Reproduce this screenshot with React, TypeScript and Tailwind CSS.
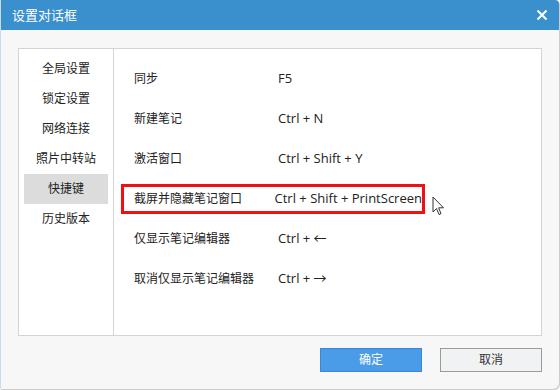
import React from "react";

const nav = ["全局设置", "锁定设置", "网络连接", "照片中转站", "快捷键", "历史版本"];
const rows: [string, string][] = [
  ["同步", "F5"],
  ["新建笔记", "Ctrl + N"],
  ["激活窗口", "Ctrl + Shift + Y"],
  ["截屏并隐藏笔记窗口", "Ctrl + Shift + PrintScreen"],
  ["仅显示笔记编辑器", "Ctrl + ←"],
  ["取消仅显示笔记编辑器", "Ctrl + →"],
];

const font = { fontFamily: '"Segoe UI", "Open Sans", "Noto Sans CJK SC", sans-serif' };

export default function App() {
  return (
    <div className="w-[560px] h-[390px] bg-white relative overflow-hidden" style={font}>
      <div className="w-[559px] h-[389px] flex flex-col rounded-br-[6px] rounded-tr-[4px] border-l border-[#c9dcef] shadow-[1px_1px_1px_#c8c8c8] bg-[#f7f7f7] overflow-hidden">
        <div className="h-[30px] bg-[#3a8fcd] flex items-center justify-between pl-[11px] pr-[10px] shrink-0">
          <span className="text-white text-[13px] leading-none">设置对话框</span>
          <svg width="12" height="12" viewBox="0 0 12 12" className="mr-[1px]">
            <path d="M1.5 1.5 L10.5 10.5 M10.5 1.5 L1.5 10.5" stroke="white" strokeWidth="2" />
          </svg>
        </div>
        <div className="flex-1 pl-[17px] pr-[17px] pt-[18px]">
          <div className="h-[288px] bg-white border border-[#d4d4d4] flex">
            <div className="w-[95px] border-r border-[#d4d4d4] pt-[5px] px-[5px] flex flex-col">
              {nav.map((n) => (
                <div
                  key={n}
                  className={`h-[30px] flex items-center justify-center text-[12px] text-[#222] ${n === "快捷键" ? "bg-[#dcdcdc]" : ""}`}
                >
                  {n}
                </div>
              ))}
            </div>
            <div className="flex-1 pl-[7px] pt-[10px] flex flex-col">
              {rows.map(([a, b], i) => (
                <div key={a} className="h-[40px] flex items-center">
                  <div
                    className={`h-[30px] flex items-center w-[304px] pl-[10px] border-[3px] ${i === 3 ? "border-[#f01010]" : "border-transparent"}`}
                  >
                    <span className="w-[144px] text-[12px] text-[#222]">{a}</span>
                    <span className="text-[13px] text-[#222] whitespace-nowrap">{b}</span>
                  </div>
                  {i === 3 && (
                    <svg width="14" height="21" viewBox="0 0 14 21" className="ml-[7px] mt-[14px]">
                      <path d="M1 1 L1 16 L4.5 12.5 L7 18.5 L9 17.7 L6.6 11.8 L11.5 11.8 Z" fill="white" stroke="#333" strokeWidth="1" strokeLinejoin="round" />
                    </svg>
                  )}
                </div>
              ))}
            </div>
          </div>
          <div className="flex justify-end gap-[18px] mt-[12px] pr-[0px]">
            <button className="w-[102px] h-[24px] bg-[#4a9ce9] border border-[#3b87d6] text-white text-[12px]">确定</button>
            <button className="w-[102px] h-[24px] bg-[#f1f2f4] border border-[#9a9a9a] text-[#333] text-[12px]">取消</button>
          </div>
        </div>
      </div>
    </div>
  );
}
